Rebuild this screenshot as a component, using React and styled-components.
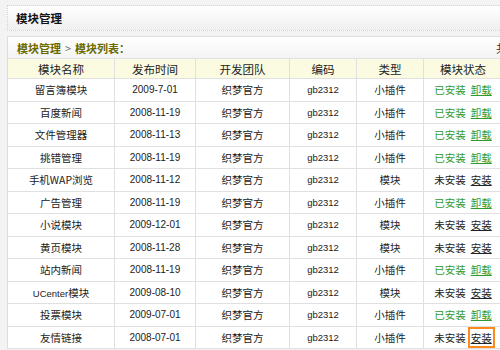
import React from 'react';
import styled, { createGlobalStyle } from 'styled-components';

const GlobalStyle = createGlobalStyle`
  html, body {
    margin: 0;
    padding: 0;
    background: #f3f3f3;
    overflow: hidden;
    font-family: "Noto Sans CJK SC", "Noto Sans", sans-serif;
    color: #222;
  }
`;

const Page = styled.div`
  width: 495px;
  padding: 5px 0 0 7px;
  display: flex;
  flex-direction: column;
  gap: 5px;
`;

const TitleBar = styled.div`
  height: 24px;
  border: 1px dotted #dcd6a8;
  background: linear-gradient(#ffffff, #efefef);
  display: flex;
  align-items: center;
  padding-left: 8px;
  font-size: 11.5px;
  font-weight: bold;
  color: #111;
`;

const Panel = styled.div`
  border: 1px solid #dedede;
  border-bottom: none;
  background: #fff;
`;

const Crumbs = styled.div`
  height: 21px;
  display: flex;
  align-items: center;
  padding-left: 9px;
  background: linear-gradient(#ffffff, #f4f4f4);
  border-bottom: 1px solid #e2e2e2;
  font-size: 11px;
  font-weight: bold;
  color: #6a6a00;
  white-space: nowrap;
`;

const Sep = styled.span`
  color: #777;
  font-weight: normal;
  margin: 0 4px;
`;

const CrumbRight = styled.span`
  margin-left: auto;
  margin-right: -6px;
  color: #333;
  font-weight: normal;
  font-size: 11px;
`;

const Grid = styled.div`
  display: grid;
  grid-template-columns: 107px 81px 94px 67px 67px 79px;
  grid-template-rows: 20px;
  grid-auto-rows: 22.5px;
`;

const Cell = styled.div`
  display: flex;
  align-items: center;
  justify-content: center;
  gap: 5px;
  border-right: 1px solid #e0e0e0;
  border-bottom: 1px solid #e0e0e0;
  background: ${(p) => (p.head ? '#fbfbe2' : '#fff')};
  font-size: ${(p) => (p.head ? 11.5 : 10.5)}px;
  color: #222;
  white-space: nowrap;
  box-sizing: border-box;
`;

const Latin = styled.span`
  font-family: "Liberation Sans", sans-serif;
  font-size: ${(p) => p.size || 10}px;
  color: #222;
`;

const Status = styled.span`
  color: ${(p) => (p.installed ? '#2f9a2f' : '#222')};
`;

const Action = styled.span`
  color: ${(p) => (p.installed ? '#2f9a2f' : '#222')};
  text-decoration: underline;
  padding: 1px 1px;
  border: 2px solid ${(p) => (p.marked ? '#ff8a1c' : 'transparent')};
  margin: -3px -3px;
`;

const rows = [
  ['留言簿模块', '2009-7-01', '小插件', true],
  ['百度新闻', '2008-11-19', '小插件', true],
  ['文件管理器', '2008-11-13', '小插件', true],
  ['挑错管理', '2008-11-19', '小插件', true],
  ['手机WAP浏览', '2008-11-12', '模块', false],
  ['广告管理', '2008-11-19', '小插件', true],
  ['小说模块', '2009-12-01', '模块', false],
  ['黄页模块', '2008-11-28', '模块', false],
  ['站内新闻', '2008-11-19', '小插件', true],
  ['UCenter模块', '2009-08-10', '模块', false],
  ['投票模块', '2009-07-01', '小插件', true],
  ['友情链接', '2008-07-01', '小插件', false],
];

const heads = ['模块名称', '发布时间', '开发团队', '编码', '类型', '模块状态'];

const Name = ({ text }) => {
  const m = text.match(/^([A-Za-z]+)(.*)$/);
  if (m) {
    return (
      <span>
        <Latin size={9.5}>{m[1]}</Latin>
        {m[2]}
      </span>
    );
  }
  return <span>{text}</span>;
};

export default function App() {
  return (
    <>
      <GlobalStyle />
      <Page>
        <TitleBar>模块管理</TitleBar>
        <Panel>
          <Crumbs>
            模块管理<Sep>&gt;</Sep>模块列表：
            <CrumbRight>共</CrumbRight>
          </Crumbs>
          <Grid>
            {heads.map((h) => (
              <Cell head key={h}>{h}</Cell>
            ))}
            {rows.map(([name, date, type, installed], i) => (
              <React.Fragment key={name}>
                <Cell><Name text={name} /></Cell>
                <Cell><Latin>{date}</Latin></Cell>
                <Cell>织梦官方</Cell>
                <Cell><Latin size={9.5}>gb2312</Latin></Cell>
                <Cell>{type}</Cell>
                <Cell>
                  <Status installed={installed}>{installed ? '已安装' : '未安装'}</Status>
                  <Action installed={installed} marked={i === rows.length - 1}>
                    {installed ? '卸载' : '安装'}
                  </Action>
                </Cell>
              </React.Fragment>
            ))}
          </Grid>
        </Panel>
      </Page>
    </>
  );
}
